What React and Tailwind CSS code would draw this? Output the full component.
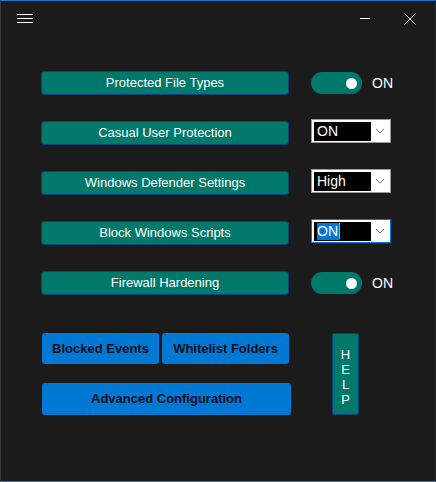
import { useState } from 'react';

const font = { fontFamily: '"Liberation Sans", Arial, sans-serif' };

function TealButton({ label }) {
  return (
    <button className="w-[248px] h-[24px] shrink-0 rounded-[3px] border border-[#0d3f7c] bg-[#00796b] text-[13px] text-white leading-none pb-[1px]">
      {label}
    </button>
  );
}

function Toggle() {
  return (
    <div className="flex items-center gap-[10px]">
      <div className="w-[51px] h-[22px] rounded-full bg-[#00796b] flex items-center justify-end pr-[5px]">
        <div className="w-[11px] h-[11px] rounded-full bg-white" />
      </div>
      <span className="text-[14px] text-white">ON</span>
    </div>
  );
}

function Chevron() {
  return (
    <svg width="10" height="6" viewBox="0 0 10 6" className="mx-auto">
      <polyline points="1,1 5,5 9,1" fill="none" stroke="#6b6b6b" strokeWidth="1" />
    </svg>
  );
}

function Select({ value, focused }) {
  return (
    <div
      className={`w-[80px] h-[24px] -mt-[4px] flex items-center bg-white p-[2px] border ${
        focused ? 'border-[#0078d7]' : 'border-[#9a9a9a]'
      }`}
    >
      <div className="w-[57px] h-[19px] bg-black flex items-center pl-[3px] text-[14px] text-white leading-none">
        {focused ? (
          <>
            <span className="bg-[#0078d7] h-[17px] flex items-center pr-[1px]">{value}</span>
            <span className="w-px h-[16px] bg-[#e8a050]" />
          </>
        ) : (
          value
        )}
      </div>
      <div className="flex-1 flex items-center">
        <Chevron />
      </div>
    </div>
  );
}

function Row({ label, children }) {
  return (
    <div className="flex items-center h-[24px] gap-[22px]">
      <TealButton label={label} />
      {children}
    </div>
  );
}

export default function App() {
  const [rows] = useState([
    { label: 'Protected File Types', type: 'toggle' },
    { label: 'Casual User Protection', type: 'select', value: 'ON' },
    { label: 'Windows Defender Settings', type: 'select', value: 'High' },
    { label: 'Block Windows Scripts', type: 'select', value: 'ON', focused: true },
    { label: 'Firewall Hardening', type: 'toggle' },
  ]);

  return (
    <div
      style={font}
      className="w-[436px] h-[482px] bg-[#1b1b1b] border-t border-b border-t-[#1a73d0] border-b-[#1a7cc8] border-l border-r border-l-[#3a3a3a] border-r-[#2a2a2a] flex flex-col overflow-hidden"
    >
      {/* Title bar */}
      <div className="h-[34px] flex items-start pt-[12px] pl-[16px] pr-[19px]">
        <div className="flex flex-col gap-[3px] pt-[1px]">
          <div className="w-[16px] h-px bg-white" />
          <div className="w-[16px] h-px bg-white" />
          <div className="w-[16px] h-px bg-white" />
        </div>
        <div className="flex-1" />
        <div className="w-[10px] h-px bg-white mt-[5px] mr-[34px]" />
        <svg width="12" height="12" viewBox="0 0 12 12">
          <path d="M0.5 0.5 L11.5 11.5 M11.5 0.5 L0.5 11.5" stroke="#e0e0e0" strokeWidth="1" />
        </svg>
      </div>

      {/* Settings rows */}
      <div className="flex flex-col gap-[26px] pl-[40px] pt-[36px]">
        {rows.map((r) =>
          r.type === 'toggle' ? (
            <Row key={r.label} label={r.label}>
              <Toggle />
            </Row>
          ) : (
            <Row key={r.label} label={r.label}>
              <Select value={r.value} focused={r.focused} />
            </Row>
          )
        )}
      </div>

      {/* Bottom buttons */}
      <div className="flex pl-[41px] pt-[38px]">
        <div className="flex flex-col gap-[19px]">
          <div className="flex gap-[3px]">
            <button className="w-[117px] h-[31px] rounded-[3px] bg-[#0078d4] text-[13px] font-bold text-[#0a0f1a]">
              Blocked Events
            </button>
            <button className="w-[127px] h-[31px] rounded-[3px] bg-[#0078d4] text-[13px] font-bold text-[#0a0f1a]">
              Whitelist Folders
            </button>
          </div>
          <button className="w-[249px] h-[32px] rounded-[3px] bg-[#0078d4] text-[13px] font-bold text-[#0a0f1a]">
            Advanced Configuration
          </button>
        </div>
        <button className="ml-[41px] w-[27px] h-[82px] rounded-[2px] border border-[#0d3f7c] bg-[#00796b] text-[13px] text-white flex flex-col items-center justify-center leading-[15px] pt-[6px]">
          <span>H</span>
          <span>E</span>
          <span>L</span>
          <span>P</span>
        </button>
      </div>
    </div>
  );
}
